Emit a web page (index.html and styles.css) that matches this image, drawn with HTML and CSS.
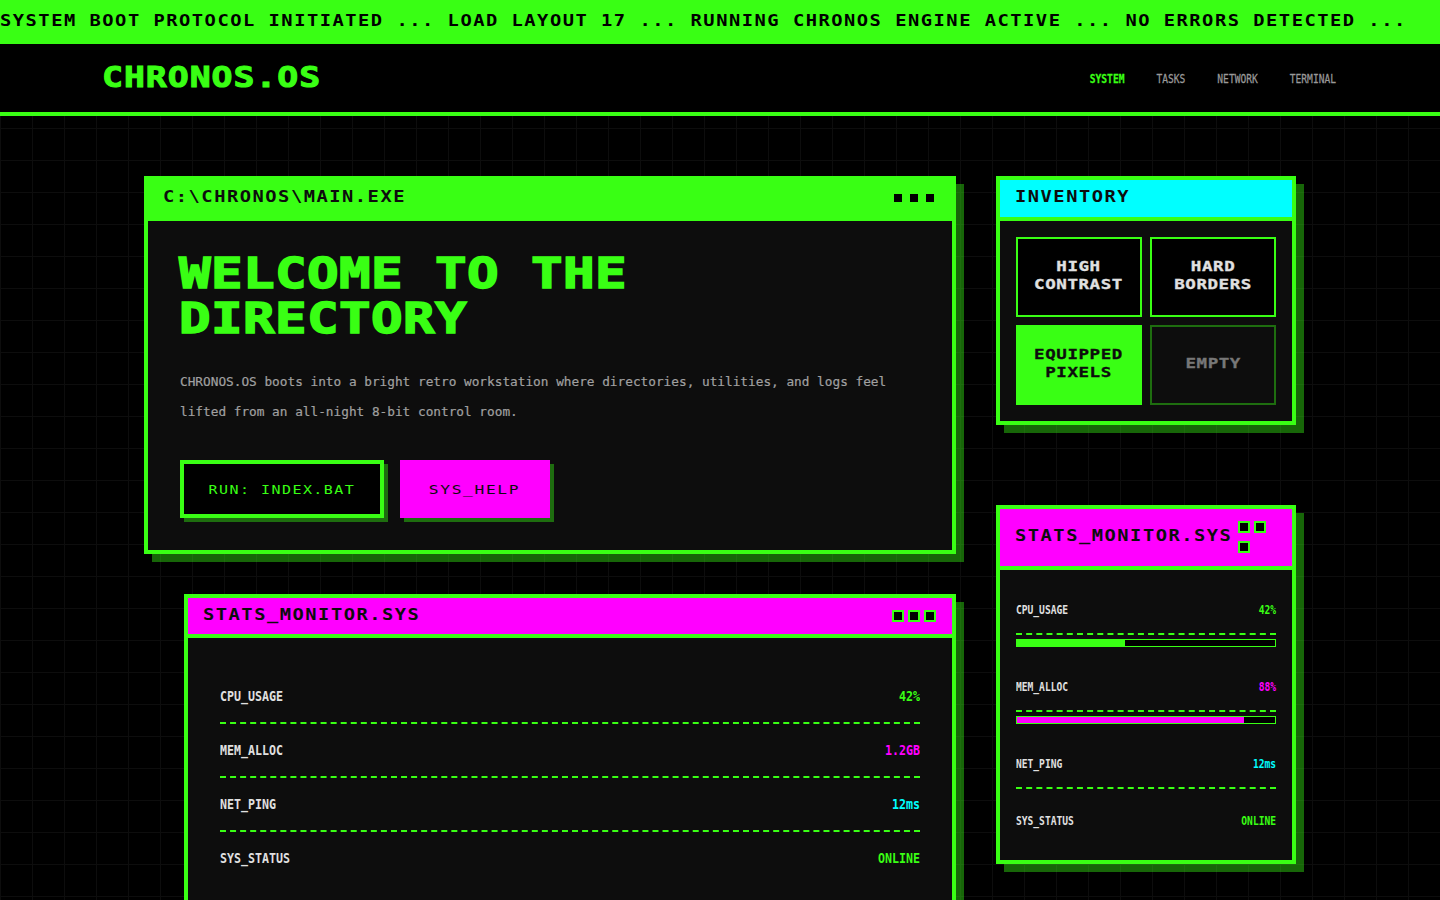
FILE: index.html
```html
<!DOCTYPE html>
<html>
	<head>
		<title>CHRONOS.OS</title>
		<link rel="stylesheet" href="styles.css">
	</head>

	<body>
		<div class="ticker"><span class="wide">SYSTEM BOOT PROTOCOL INITIATED ... LOAD LAYOUT 17 ... RUNNING CHRONOS ENGINE ACTIVE ... NO ERRORS DETECTED ...</span></div>

		<header class="topbar">
			<div class="logo"><span class="wide">CHRONOS.OS</span></div>
			<nav class="nav">
				<a class="active">SYSTEM</a>
				<a>TASKS</a>
				<a>NETWORK</a>
				<a>TERMINAL</a>
			</nav>
		</header>

		<main class="layout">
			<div class="col">
				<section class="window">
					<div class="titlebar">
						<span class="wide">C:\CHRONOS\MAIN.EXE</span>
						<div class="dots"><i></i><i></i><i></i></div>
					</div>
					<div class="hero">
						<h1><span class="wide">WELCOME TO THE<br>DIRECTORY</span></h1>
						<p>CHRONOS.OS boots into a bright retro workstation where directories, utilities, and logs feel<br>lifted from an all-night 8-bit control room.</p>
						<div class="actions">
							<button class="btn"><span>RUN: INDEX.BAT</span></button>
							<button class="btn btn-help"><span>SYS_HELP</span></button>
						</div>
					</div>
				</section>

				<section class="window window-inset">
					<div class="titlebar titlebar-pink titlebar-short">
						<span class="wide">STATS_MONITOR.SYS</span>
						<div class="dots"><i></i><i></i><i></i></div>
					</div>
					<div class="stats">
						<div class="row"><span>CPU_USAGE</span><b class="green">42%</b></div>
						<div class="row"><span>MEM_ALLOC</span><b class="pink">1.2GB</b></div>
						<div class="row"><span>NET_PING</span><b class="cyan">12ms</b></div>
						<div class="row"><span>SYS_STATUS</span><b class="green">ONLINE</b></div>
					</div>
				</section>
			</div>

			<div class="col col-side">
				<section class="window">
					<div class="titlebar titlebar-cyan">
						<span class="wide">INVENTORY</span>
					</div>
					<div class="inventory">
						<div class="slot"><span>HIGH<br>CONTRAST</span></div>
						<div class="slot"><span>HARD<br>BORDERS</span></div>
						<div class="slot slot-on"><span>EQUIPPED<br>PIXELS</span></div>
						<div class="slot slot-empty"><span>EMPTY</span></div>
					</div>
				</section>

				<section class="window">
					<div class="titlebar titlebar-pink titlebar-tall">
						<span class="wide">STATS_MONITOR.SYS</span>
						<div class="dots dots-wrap"><i></i><i></i><i></i></div>
					</div>
					<div class="stats stats-small">
						<div class="group">
							<div class="row"><span>CPU_USAGE</span><b class="green">42%</b></div>
							<div class="meter"><div class="fill" style="width: 42%"></div></div>
						</div>
						<div class="group">
							<div class="row"><span>MEM_ALLOC</span><b class="pink">88%</b></div>
							<div class="meter"><div class="fill fill-pink" style="width: 88%"></div></div>
						</div>
						<div class="group">
							<div class="row"><span>NET_PING</span><b class="cyan">12ms</b></div>
						</div>
						<div class="group">
							<div class="row"><span>SYS_STATUS</span><b class="green">ONLINE</b></div>
						</div>
					</div>
				</section>
			</div>
		</main>
	</body>
</html>
```

FILE: styles.css
```css
* {
	box-sizing: border-box;
}

body {
	margin: 0;
	background-color: #000;
	background-image:
		linear-gradient(#0d0d0d 1px, transparent 1px),
		linear-gradient(90deg, #0d0d0d 1px, transparent 1px);
	background-size: 32px 32px;
	color: #e0e0e0;
	font-family: "DejaVu Sans Mono", monospace;
}

/* the pixel look is wide, so stretch the mono font sideways */
.wide {
	display: inline-block;
	font-weight: bold;
	white-space: nowrap;
	transform: scaleX(1.25);
	transform-origin: left center;
}

.ticker {
	height: 44px;
	background: #39ff14;
	color: #000;
	font-size: 15px;
	line-height: 42px;
	letter-spacing: 1.2px;
	overflow: hidden;
}

.topbar {
	display: flex;
	justify-content: space-between;
	align-items: center;
	height: 72px;
	padding: 0 104px;
	background: #000;
	border-bottom: 4px solid #39ff14;
}

.logo {
	color: #39ff14;
	font-size: 29px;
	letter-spacing: 0.8px;
	margin: -3px 0 0 -2px;
	-webkit-text-stroke: 1px #39ff14;
}

.logo .wide {
	transform: scaleX(1.2);
}

/* small text is tall and narrow, same trick the other way */
.nav {
	display: flex;
	gap: 32px;
	font-size: 9.6px;
	color: #999;
	-webkit-text-stroke: 0.2px currentColor;
}

.nav a {
	display: inline-block;
	transform: scaleY(1.35);
}

.nav .active {
	color: #39ff14;
	font-weight: bold;
}

.layout {
	display: grid;
	grid-template-columns: 812px 300px;
	gap: 40px;
	width: 1152px;
	margin: 60px auto 0;
	padding-bottom: 40px;
}

.col {
	display: flex;
	flex-direction: column;
	gap: 40px;
}

.col-side {
	gap: 80px;
}

.window {
	background: #0d0d0d;
	border: 4px solid #39ff14;
	box-shadow: 8px 8px 0 rgba(57, 255, 20, 0.4);
}

.window-inset {
	margin-left: 40px;
}

.titlebar {
	display: flex;
	justify-content: space-between;
	align-items: center;
	padding: 8px 16px;
	background: #39ff14;
	border-bottom: 4px solid #39ff14;
	box-sizing: content-box;
	color: #0d0d0d;
	font-size: 15px;
	line-height: 21px;
	letter-spacing: 1.2px;
}

.titlebar .wide {
	transform: translate(-1px, -1px) scaleX(1.25);
}

.titlebar-pink {
	background: #f0f;
}

.titlebar-cyan {
	background: #0ff;
}

.titlebar-short {
	line-height: 20px;
}

.titlebar-tall {
	padding: 12px 16px 13px;
}

.dots {
	display: flex;
	gap: 4px;
	margin-bottom: 1px;
}

.titlebar-short .dots, .dots-wrap {
	margin-bottom: 0;
}

.dots i {
	width: 12px;
	height: 12px;
	background: #000;
	border: 2px solid #39ff14;
}

.dots-wrap {
	flex-wrap: wrap;
	row-gap: 8px;
	width: 38px;
}

.hero {
	padding: 30px 32px 32px;
}

h1 {
	margin: 0 0 26px -1px;
	color: #39ff14;
	font-size: 42px;
	line-height: 45px;
	letter-spacing: 0.32px;
	-webkit-text-stroke: 1.5px #39ff14;
}

.hero p {
	margin: 0 0 33px;
	color: #a0a0a0;
	font-size: 12.75px;
	line-height: 30px;
	-webkit-text-stroke: 0.2px currentColor;
}

.actions {
	display: flex;
	gap: 16px;
}

.btn {
	height: 58px;
	padding: 0 34px;
	background: #000;
	border: 4px solid #39ff14;
	box-shadow: 4px 4px 0 rgba(57, 255, 20, 0.4);
	color: #39ff14;
	font-family: inherit;
	font-size: 13px;
	letter-spacing: 1.3px;
}

.btn span {
	display: inline-block;
	transform: scaleX(1.15);
}

.btn-help {
	padding: 0 34.5px;
	background: #f0f;
	border-color: #f0f;
	color: #0d0d0d;
}

.btn-help span {
	transform: scaleX(1.25);
}

.stats {
	padding: 32px;
	font-size: 11.63px;
}

.row {
	display: flex;
	justify-content: space-between;
	padding: 16px 0;
	border-bottom: 2px dashed #39ff14;
	line-height: 20px;
}

.row span, .row b {
	display: inline-block;
	font-weight: bold;
	transform: scaleY(1.2);
}

.stats > .row:last-child {
	border-bottom: 0;
}

.stats-small {
	padding: 16px;
	font-size: 9.6px;
}

.stats-small .row {
	line-height: 15px;
}

.stats-small .row span, .stats-small .row b {
	transform: scaleY(1.35);
}

.group {
	padding-bottom: 8px;
}

.group:last-child {
	padding-bottom: 0;
}

.group:last-child .row {
	border-bottom: 0;
}

.meter {
	height: 8px;
	margin: 4px 0 8px;
	background: #000;
	border: 1px solid #39ff14;
}

.fill {
	height: 100%;
	background: #39ff14;
}

.fill-pink {
	background: #f0f;
}

.green {
	color: #39ff14;
}

.pink {
	color: #f0f;
}

.cyan {
	color: #0ff;
}

.inventory {
	display: grid;
	grid-template-columns: 1fr 1fr;
	grid-auto-rows: 80px;
	gap: 8px;
	padding: 16px;
}

.slot {
	display: flex;
	justify-content: center;
	align-items: center;
	padding-bottom: 4px;
	background: #000;
	border: 2px solid #39ff14;
	color: #e0e0e0;
	font-size: 14px;
	font-weight: bold;
	line-height: 18px;
	letter-spacing: 0.45px;
	text-align: center;
	-webkit-text-stroke: 0.3px currentColor;
}

.slot span {
	transform: scaleX(1.25);
}

.slot-on {
	background: #39ff14;
	color: #0d0d0d;
}

.slot-empty {
	background: #0d0d0d;
	border-color: rgba(57, 255, 20, 0.4);
	color: #777;
}
```
